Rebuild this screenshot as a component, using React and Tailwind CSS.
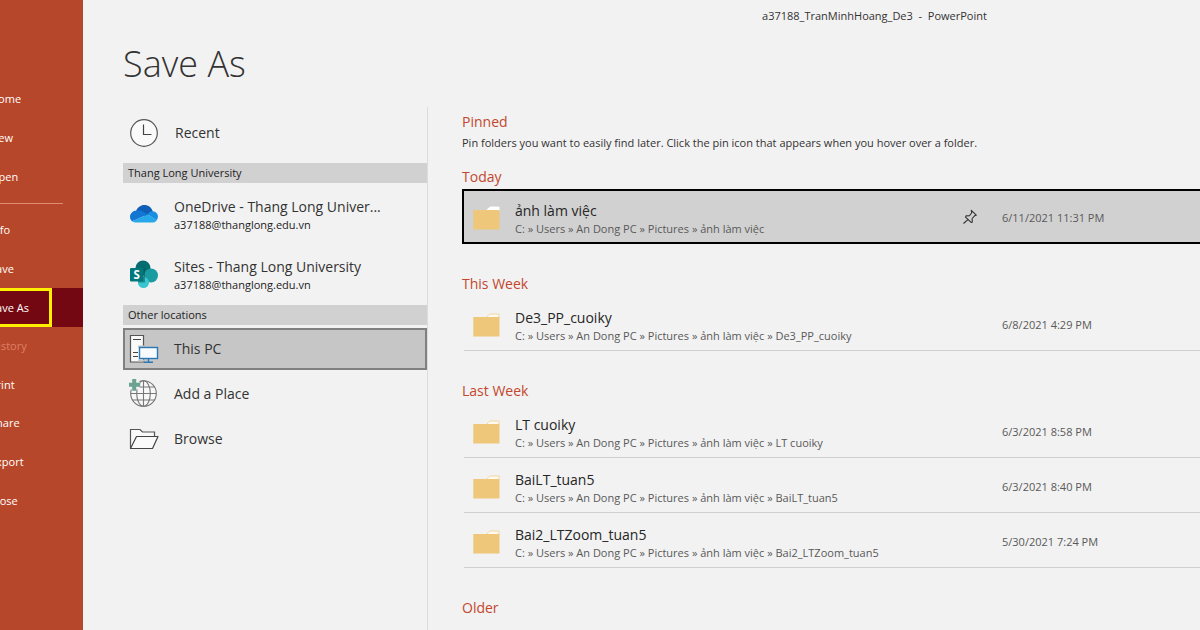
const mainNav = ['Home', 'New', 'Open']

const fileNav = ['Info', 'Save', 'Save As', 'History', 'Print', 'Share', 'Export', 'Close']

const root = 'C: » Users » An Dong PC » Pictures » ảnh làm việc'

const groups = [
  {
    title: 'Today',
    folders: [{ name: 'ảnh làm việc', path: root, date: '6/11/2021 11:31 PM', active: true }],
  },
  {
    title: 'This Week',
    folders: [{ name: 'De3_PP_cuoiky', path: `${root} » De3_PP_cuoiky`, date: '6/8/2021 4:29 PM' }],
  },
  {
    title: 'Last Week',
    folders: [
      { name: 'LT cuoiky', path: `${root} » LT cuoiky`, date: '6/3/2021 8:58 PM' },
      { name: 'BaiLT_tuan5', path: `${root} » BaiLT_tuan5`, date: '6/3/2021 8:40 PM' },
      { name: 'Bai2_LTZoom_tuan5', path: `${root} » Bai2_LTZoom_tuan5`, date: '5/30/2021 7:24 PM' },
    ],
  },
  { title: 'Older', folders: [] },
]

function ClockIcon() {
  return (
    <svg width="30" height="30" viewBox="0 0 30 30" fill="none" aria-hidden="true">
      <circle cx="15" cy="15" r="13.3" fill="#fafafa" stroke="#555" strokeWidth="1.2" />
      <path d="M14.5 6.5v10h8" stroke="#444" strokeWidth="1.2" />
    </svg>
  )
}

function OneDriveIcon() {
  return (
    <svg width="30" height="30" viewBox="0 0 30 30" aria-hidden="true">
      <path d="M7 11C8.500 7.500 11.600 5 15.300 5c4 0 7.500 2.700 8.500 6.500L17 17z" fill="#0f5fb8" />
      <path d="M7.500 10.500c2.200-.6 4.400-.2 6.200 1l5 3-15.500 6.800C1.800 20.200 1 18.700 1 17c0-3.500 2.900-6.300 6.500-6.500z" fill="#1277d3" />
      <path d="M18.500 14.500c1.600-2.200 3.200-3.300 5.300-3.200 2.900.2 5.100 2.500 5.100 5.300 0 1.500-.5 2.700-1.400 3.700z" fill="#1a8ee0" />
      <path d="M3 21.300l15.500-6.800 9.300 5.700c-1 1.500-2.500 2.300-4.300 2.300h-16c-1.700 0-3.300-.4-4.500-1.200z" fill="#28a8ea" />
    </svg>
  )
}

function SharePointIcon() {
  return (
    <svg width="30" height="30" viewBox="0 0 30 30" aria-hidden="true">
      <circle cx="14" cy="8" r="7.500" fill="#036c70" />
      <circle cx="22" cy="15.500" r="7" fill="#1a9ba1" />
      <circle cx="14.500" cy="22.500" r="5.500" fill="#37c6d0" />
      <path d="M14.500 8.500H16v14h-7a5.500 5.500 0 0 1 0-1z" fill="#03494c" opacity=".45" />
      <rect x="1" y="8" width="13.500" height="13.500" rx="1" fill="#03787c" />
      <text x="7.700" y="18.800" textAnchor="middle" fill="#fff" fontSize="11.500" fontWeight="700" fontFamily="Open Sans">
        S
      </text>
    </svg>
  )
}

function PcIcon() {
  return (
    <svg width="30" height="30" viewBox="0 0 30 30" fill="none" aria-hidden="true">
      <path d="M1.500 1.500h13V28h-13z" fill="#fafafa" stroke="#555" strokeWidth="1.200" />
      <path d="M4 5.500h8M4 18.500h5M4 22.500h5" stroke="#444" strokeWidth="1.200" />
      <path d="M9 12.500h6M9 26.500h6" stroke="#c6c6c6" strokeWidth="2" />
      <rect x="10.500" y="13.500" width="18" height="11" fill="#f8fbfe" stroke="#2b78b4" strokeWidth="1.400" />
      <path d="M19.500 25v3M15 28.300h9" stroke="#2b78b4" strokeWidth="1.400" />
    </svg>
  )
}

function GlobeIcon() {
  return (
    <svg width="30" height="30" viewBox="0 0 30 30" fill="none" aria-hidden="true">
      <g stroke="#777" strokeWidth="1.100">
        <circle cx="14.500" cy="14.500" r="12.800" fill="#f8f8f8" />
        <ellipse cx="14.500" cy="14.500" rx="6.800" ry="12.800" />
        <path d="M14.500 1.700v25.600M3.500 8h22M1.700 14.500h25.600M3.500 21h22" />
      </g>
      <path d="M-1 0h11.500v10.500h-11.500z" fill="#f2f2f2" />
      <path d="M3.200 0h4v3.700h4v4h-4v4h-4v-4h-4v-4h4z" fill="#6ba292" />
    </svg>
  )
}

function OpenFolderIcon() {
  return (
    <svg width="30" height="30" viewBox="0 0 30 30" fill="none" aria-hidden="true">
      <path d="M1.500 24.500V5.500h9.500l2.500 2.500h12v5" fill="#fafafa" stroke="#555" strokeWidth="1.200" />
      <path d="M1.500 24.500l6-12h21.500l-5.500 12z" fill="#fafafa" stroke="#444" strokeWidth="1.200" strokeLinejoin="round" />
    </svg>
  )
}

function FolderIcon({ active }) {
  return (
    <svg width="28" height="26" viewBox="0 0 28 26" aria-hidden="true" className="shrink-0">
      <path
        d="M14.500 4.500l1.800-2q1-1.500 2.500-1.500h8.200v4H14.500z"
        fill={active ? '#fff' : '#fdfaf2'}
        stroke={active ? '#fff' : '#f0d296'}
        strokeWidth=".9"
      />
      <path d="M1.300 4H26.500l1 .5V23.500H1.300z" fill="#eec77b" />
    </svg>
  )
}

function PinIcon() {
  return (
    <svg width="16" height="16" viewBox="0 0 16 16" fill="none" stroke="#333" strokeWidth="1.100" aria-hidden="true">
      <path d="M9.300 1.300l5 4.900-1.500.4-2.700 2.900.2 3.600-1.200.3-5.600-5.300.5-1.200 3.500-.1 2.200-3.100z" strokeLinejoin="round" />
      <path d="M6.200 10.300L1.500 14.500" />
    </svg>
  )
}

function NavItem({ label }) {
  const current = label === 'Save As'
  const disabled = label === 'History'

  return (
    <li className={`flex ${current ? 'bg-[#730812]' : ''}`}>
      <button
        disabled={disabled}
        className={`-ml-[13px] w-[65px] border-[3px] text-left text-[11px] leading-4 font-medium whitespace-nowrap ${
          current ? 'border-[#fcf000]' : 'border-transparent'
        } ${disabled ? 'text-[#dd8069]' : 'text-white'}`}
      >
        {label}
      </button>
    </li>
  )
}

function Place({ icon, label, active }) {
  return (
    <button
      className={`flex h-[42px] w-full items-center gap-[15px] border-2 pl-1 text-left text-sm leading-5 text-[#333] ${
        active ? 'border-[#808080] bg-[#c6c6c6]' : 'border-transparent'
      }`}
    >
      {icon}
      {label}
    </button>
  )
}

function Account({ icon, name, mail }) {
  return (
    <button className="flex h-[60px] w-full items-center gap-[15px] pt-1 pl-[6px] text-left">
      {icon}
      <span className="block min-w-0">
        <span className="block text-sm leading-5 text-[#333]">{name}</span>
        <span className="block text-[11px] leading-4 text-[#222]">{mail}</span>
      </span>
    </button>
  )
}

function Band({ children }) {
  return <h2 className="bg-[#d1d1d1] pl-[5px] text-[11px] leading-5 text-[#222]">{children}</h2>
}

function FolderRow({ name, path, date, active }) {
  return (
    <li
      className={`flex h-[55px] items-center pl-2 ${
        active ? 'border-2 border-r-0 border-black bg-[#d1d1d1]' : 'ml-[2px] border-b border-[#cfcfcf]'
      }`}
    >
      <button className="flex min-w-0 flex-1 items-center gap-[15px] pt-[5px] text-left">
        <FolderIcon active={active} />
        <span className="block">
          <span className="block text-sm leading-5 text-[#262626]">{name}</span>
          <span className="block text-[11px] leading-4 text-[#595959]">{path}</span>
        </span>
      </button>
      {active && (
        <button aria-label="Pin" className="mr-6">
          <PinIcon />
        </button>
      )}
      <span className="w-[198px] pt-[3px] text-[11px] leading-4 text-[#595959]">{date}</span>
    </li>
  )
}

export default function App() {
  return (
    <div className="flex min-h-screen bg-[#f2f2f2] font-['Open_Sans','Noto_Sans',sans-serif]">
      <nav className="w-[83px] shrink-0 overflow-hidden bg-[#b7472a] pt-20">
        <ul className="grid min-h-[116px] auto-rows-fr">
          {mainNav.map((label) => (
            <NavItem key={label} label={label} />
          ))}
        </ul>
        <hr className="my-[7px] mr-5 border-[#de8c78]" />
        <ul className="grid min-h-[309px] auto-rows-fr">
          {fileNav.map((label) => (
            <NavItem key={label} label={label} />
          ))}
        </ul>
      </nav>

      <div className="flex min-w-0 flex-1 flex-col">
        <header className="pt-2 pl-[466px] text-center text-[11px] leading-4 whitespace-pre text-[#333]">
          {'a37188_TranMinhHoang_De3  -  PowerPoint'}
        </header>

        <h1 className="mt-4 pl-10 text-4xl leading-12 font-light text-[#333]">Save As</h1>

        <div className="mt-[19px] flex flex-1 pl-10">
          <section className="w-[305px] shrink-0 border-r border-[#dcdcdc]">
            <button className="flex h-14 w-full items-center gap-4 pb-1 pl-[6px] text-left text-sm leading-5 text-[#333]">
              <ClockIcon />
              Recent
            </button>
            <Band>Thang Long University</Band>
            <Account icon={<OneDriveIcon />} name="OneDrive - Thang Long Univer..." mail="a37188@thanglong.edu.vn" />
            <Account icon={<SharePointIcon />} name="Sites - Thang Long University" mail="a37188@thanglong.edu.vn" />
            <div className="mt-[2px] flex flex-col gap-[3px]">
              <Band>Other locations</Band>
              <Place icon={<PcIcon />} label="This PC" active />
              <Place icon={<GlobeIcon />} label="Add a Place" />
              <Place icon={<OpenFolderIcon />} label="Browse" />
            </div>
          </section>

          <main className="min-w-0 flex-1 pt-[3px] pl-[34px]">
            <h2 className="text-sm leading-6 text-[#c2472e]">Pinned</h2>
            <p className="pt-px text-[11px] leading-4 text-[#333]">
              Pin folders you want to easily find later. Click the pin icon that appears when you hover over a folder.
            </p>
            <div className="mt-[14px] flex flex-col gap-7">
              {groups.map((group) => (
                <section key={group.title}>
                  <h2 className="text-sm leading-6 text-[#c2472e]">{group.title}</h2>
                  <ul>
                    {group.folders.map((folder) => (
                      <FolderRow key={folder.name} {...folder} />
                    ))}
                  </ul>
                </section>
              ))}
            </div>
          </main>
        </div>
      </div>
    </div>
  )
}
